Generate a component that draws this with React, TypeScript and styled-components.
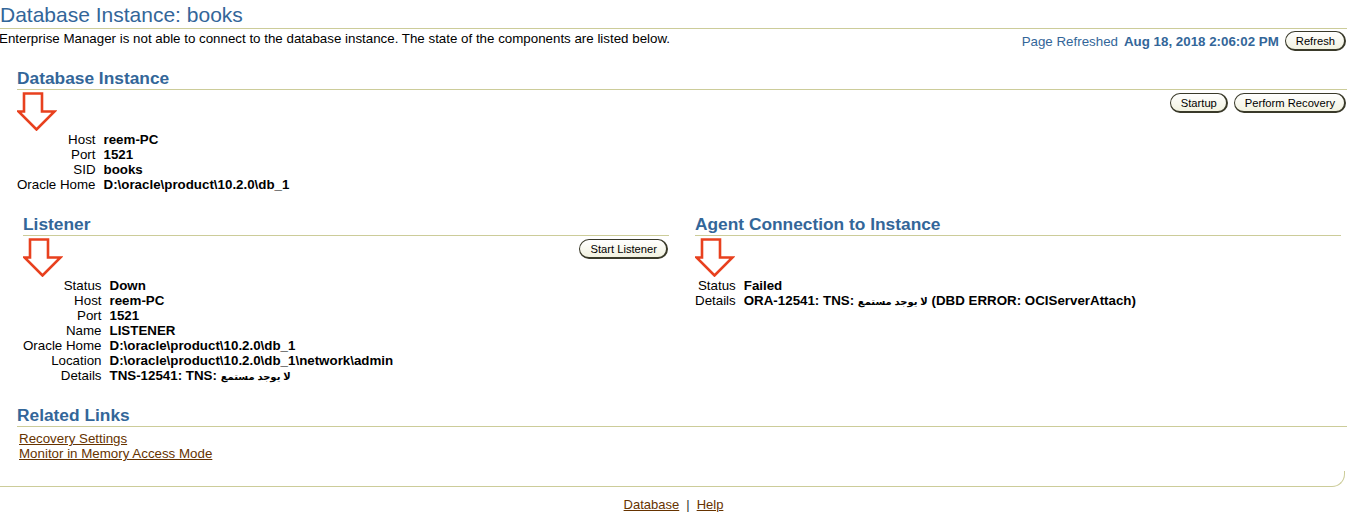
import React from 'react';
import styled, { createGlobalStyle } from 'styled-components';

const GlobalStyle = createGlobalStyle`
  html, body {
    margin: 0;
    padding: 0;
    background: #fff;
  }
  body {
    font-family: "Liberation Sans", Arial, "DejaVu Sans", sans-serif;
    font-size: 13.33px;
    color: #000;
  }
`;

const blue = '#336699';
const rule = '#cccc99';
const linkBrown = '#663300';

const Page = styled.div`
  width: 1347px;
`;

const TitleBar = styled.h1`
  margin: 0;
  padding: 3px 0 1px 0;
  font-size: 21px;
  line-height: 24px;
  font-weight: normal;
  color: ${blue};
  border-bottom: 1px solid ${rule};
`;

const InfoRow = styled.div`
  display: flex;
  justify-content: space-between;
  align-items: flex-start;
  padding: 2px 1px 0 0;
`;

const Description = styled.div`
  line-height: 15px;
  margin-left: -1px;
`;

const RefreshCluster = styled.div`
  display: flex;
  align-items: center;
  gap: 6px;
  color: ${blue};
  line-height: 15px;
`;

const RefreshDate = styled.b`
  font-weight: bold;
`;

const Button = styled.button`
  height: 20px;
  padding: 0 9px 0 10px;
  font-family: "Liberation Sans", Arial, sans-serif;
  font-size: 11.2px;
  line-height: 16px;
  color: #000;
  background: linear-gradient(#ffffff, #f2f2e0);
  border: 1px solid #3a3a2a;
  border-right-width: 2px;
  border-bottom-width: 2px;
  border-radius: 10px;
  cursor: pointer;
`;

const Body = styled.div`
  padding-left: 17px;
`;

const Section = styled.section<{ $top: number }>`
  margin-top: ${p => p.$top}px;
`;

const SectionTitle = styled.h2`
  margin: 0;
  padding-bottom: 1px;
  font-size: 17.33px;
  line-height: 20px;
  font-weight: bold;
  color: ${blue};
  border-bottom: 1px solid ${rule};
`;

const Columns = styled.div`
  display: grid;
  grid-template-columns: 1fr 1fr;
  column-gap: 26px;
  padding: 0 6px;
  margin-top: 22px;
`;

const ActionRow = styled.div`
  display: flex;
  justify-content: space-between;
  align-items: flex-start;
  height: 42px;
  padding-right: 1px;
`;

const ButtonGroup = styled.div`
  display: flex;
  gap: 6px;
  margin-top: 3px;
`;

const ArrowSvg = styled.svg`
  display: block;
  margin-top: 1px;
  flex: none;
`;

const PropGrid = styled.dl`
  display: grid;
  grid-template-columns: max-content 1fr;
  grid-auto-rows: 15px;
  column-gap: 8px;
  margin: 0;
  line-height: 15px;
`;

const PropLabel = styled.dt`
  text-align: right;
`;

const PropValue = styled.dd`
  margin: 0;
  font-weight: bold;
  white-space: nowrap;
`;

const Arabic = styled.span`
  font-size: 10px;
  line-height: 1;
`;

const LinkList = styled.div`
  display: flex;
  flex-direction: column;
  align-items: flex-start;
  padding: 4px 0 0 2px;
  line-height: 15px;
`;

const TextLink = styled.a`
  color: ${linkBrown};
  text-decoration: underline;
`;

const FrameEnd = styled.div`
  height: 15px;
  margin: 10px 2px 0 0;
  border-bottom: 1px solid ${rule};
  border-right: 1px solid ${rule};
  border-bottom-right-radius: 13px;
`;

const Footer = styled.div`
  padding-top: 10px;
  text-align: center;
  line-height: 15px;
  font-size: 13px;
  color: #333;
`;

const Divider = styled.span`
  margin: 0 7px;
`;

const DownArrow = () => (
  <ArrowSvg width={40} height={40} viewBox="0 0 40 40">
    <path
      d="M7 2.5 H25 V20.5 H37.5 L19.5 38.5 L1.5 20.5 H7 Z"
      fill="none"
      stroke="#e8401e"
      strokeWidth={2.6}
    />
  </ArrowSvg>
);

type Row = [string, React.ReactNode];

const PropertyList = ({ rows }: { rows: Row[] }) => (
  <PropGrid>
    {rows.map(([label, value]) => (
      <React.Fragment key={label}>
        <PropLabel>{label}</PropLabel>
        <PropValue>{value}</PropValue>
      </React.Fragment>
    ))}
  </PropGrid>
);

const noListener = <Arabic>لا يوجد مستمع</Arabic>;

const dbRows: Row[] = [
  ['Host', 'reem-PC'],
  ['Port', '1521'],
  ['SID', 'books'],
  ['Oracle Home', 'D:\\oracle\\product\\10.2.0\\db_1'],
];

const listenerRows: Row[] = [
  ['Status', 'Down'],
  ['Host', 'reem-PC'],
  ['Port', '1521'],
  ['Name', 'LISTENER'],
  ['Oracle Home', 'D:\\oracle\\product\\10.2.0\\db_1'],
  ['Location', 'D:\\oracle\\product\\10.2.0\\db_1\\network\\admin'],
  ['Details', <>TNS-12541: TNS: {noListener}</>],
];

const agentRows: Row[] = [
  ['Status', 'Failed'],
  ['Details', <>ORA-12541: TNS: {noListener} (DBD ERROR: OCIServerAttach)</>],
];

export default function App() {
  return (
    <Page>
      <GlobalStyle />
      <TitleBar>Database Instance: books</TitleBar>
      <InfoRow>
        <Description>
          Enterprise Manager is not able to connect to the database instance. The state of the
          components are listed below.
        </Description>
        <RefreshCluster>
          <span>Page Refreshed</span>
          <RefreshDate>Aug 18, 2018 2:06:02 PM</RefreshDate>
          <Button>Refresh</Button>
        </RefreshCluster>
      </InfoRow>

      <Body>
        <Section $top={17}>
          <SectionTitle>Database Instance</SectionTitle>
          <ActionRow>
            <DownArrow />
            <ButtonGroup>
              <Button>Startup</Button>
              <Button>Perform Recovery</Button>
            </ButtonGroup>
          </ActionRow>
          <PropertyList rows={dbRows} />
        </Section>

        <Columns>
          <Section $top={0}>
            <SectionTitle>Listener</SectionTitle>
            <ActionRow>
              <DownArrow />
              <ButtonGroup>
                <Button>Start Listener</Button>
              </ButtonGroup>
            </ActionRow>
            <PropertyList rows={listenerRows} />
          </Section>
          <Section $top={0}>
            <SectionTitle>Agent Connection to Instance</SectionTitle>
            <ActionRow>
              <DownArrow />
            </ActionRow>
            <PropertyList rows={agentRows} />
          </Section>
        </Columns>

        <Section $top={22}>
          <SectionTitle>Related Links</SectionTitle>
          <LinkList>
            <TextLink href="#">Recovery Settings</TextLink>
            <TextLink href="#">Monitor in Memory Access Mode</TextLink>
          </LinkList>
        </Section>
      </Body>

      <FrameEnd />
      <Footer>
        <TextLink href="#">Database</TextLink>
        <Divider>|</Divider>
        <TextLink href="#">Help</TextLink>
      </Footer>
    </Page>
  );
}
